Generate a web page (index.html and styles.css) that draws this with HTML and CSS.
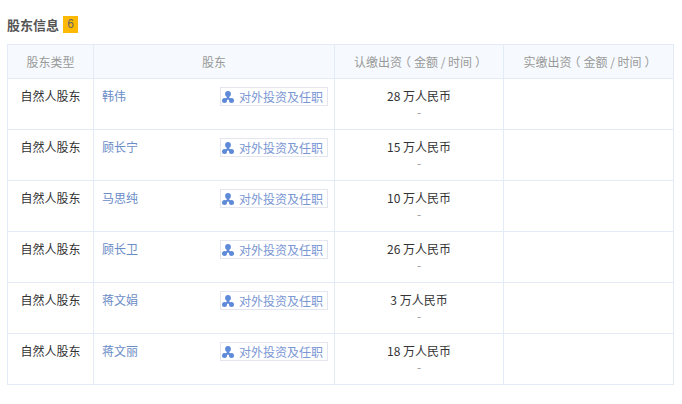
FILE: index.html
```html
<!DOCTYPE html>
<html lang="zh">
<head>
<meta charset="utf-8">
<title>股东信息</title>
<link rel="stylesheet" href="styles.css">
</head>
<body>
<svg class="defs" width="0" height="0"><symbol id="net" viewBox="0 0 12 12"><circle cx="6" cy="3" r="2.900"/><circle cx="2.500" cy="9.500" r="2.500"/><circle cx="9.500" cy="9.500" r="2.500"/><path d="M4.800 4h2.400v2.500l3 2.200-1 1.300L6 8.500 3.200 10l-1-1.300 2.600-2.200z"/></symbol></svg>
<h2 class="title">股东信息<span class="count">6</span></h2>
<table class="holders">
<colgroup><col class="c1"><col class="c2"><col class="c3"><col class="c4"></colgroup>
<thead><tr><th>股东类型</th><th>股东</th><th>认缴出资<span class="par">（</span>金额 / 时间<span class="par">）</span></th><th>实缴出资<span class="par">（</span>金额 / 时间<span class="par">）</span></th></tr></thead>
<tbody>
<tr><td class="type">自然人股东</td><td class="who"><div class="holder"><a class="name">韩伟</a><a class="btn"><svg class="ico"><use href="#net"/></svg>对外投资及任职</a></div></td><td class="money"><div>28 万人民币</div><div class="date">-</div></td><td></td></tr>
<tr><td class="type">自然人股东</td><td class="who"><div class="holder"><a class="name">顾长宁</a><a class="btn"><svg class="ico"><use href="#net"/></svg>对外投资及任职</a></div></td><td class="money"><div>15 万人民币</div><div class="date">-</div></td><td></td></tr>
<tr><td class="type">自然人股东</td><td class="who"><div class="holder"><a class="name">马思纯</a><a class="btn"><svg class="ico"><use href="#net"/></svg>对外投资及任职</a></div></td><td class="money"><div>10 万人民币</div><div class="date">-</div></td><td></td></tr>
<tr><td class="type">自然人股东</td><td class="who"><div class="holder"><a class="name">顾长卫</a><a class="btn"><svg class="ico"><use href="#net"/></svg>对外投资及任职</a></div></td><td class="money"><div>26 万人民币</div><div class="date">-</div></td><td></td></tr>
<tr><td class="type">自然人股东</td><td class="who"><div class="holder"><a class="name">蒋文娟</a><a class="btn"><svg class="ico"><use href="#net"/></svg>对外投资及任职</a></div></td><td class="money"><div>3 万人民币</div><div class="date">-</div></td><td></td></tr>
<tr><td class="type">自然人股东</td><td class="who"><div class="holder"><a class="name">蒋文丽</a><a class="btn"><svg class="ico"><use href="#net"/></svg>对外投资及任职</a></div></td><td class="money"><div>18 万人民币</div><div class="date">-</div></td><td></td></tr>
</tbody>
</table>
</body>
</html>
```
FILE: styles.css
```css
* { box-sizing: border-box; }
html, body { margin: 0; background: #fff; }
body {
  padding: 15px 8px 0 7px;
  font-family: "Noto Sans CJK SC", "Liberation Sans", sans-serif;
  font-size: 12px;
  line-height: 17px;
  color: #333;
}
.defs { position: absolute; }
.title {
  display: flex;
  align-items: center;
  gap: 4px;
  height: 18px;
  margin: 0 0 11px;
  font-size: 13px;
  font-weight: 700;
  color: #555;
}
.count {
  width: 15px;
  height: 17px;
  background: #fdb900;
  color: #666;
  font-weight: 400;
  font-family: "Liberation Sans", sans-serif;
  font-size: 12px;
  line-height: 17px;
  text-align: center;
}
.holders {
  width: 667px;
  border-collapse: collapse;
  table-layout: fixed;
}
.c1 { width: 86px; }
.c2 { width: 241px; }
.c3 { width: 169px; }
.c4 { width: 170px; }
.holders th, .holders td { border: 1px solid #e3ebf6; padding: 0; }
.holders th {
  height: 34px;
  padding-bottom: 1px;
  background: #f6fafe;
  color: #999;
  font-weight: 400;
  text-align: center;
  vertical-align: middle;
}
.par {
  display: inline-block;
  width: 12px;
  text-align: center;
  font-feature-settings: "halt";
}
.holders td { height: 51px; vertical-align: top; }
.holders .type { padding-top: 8px; text-align: center; color: #333; }
.holders .who { padding-top: 8px; }
.holder {
  display: flex;
  justify-content: space-between;
  align-items: flex-start;
  padding: 0 6px 0 8px;
}
.name { color: #6a8cc7; }
.btn {
  display: flex;
  align-items: center;
  height: 19px;
  padding: 0 4px 0 1px;
  border: 1px solid #e3e6ee;
  color: #7b97d4;
  white-space: nowrap;
}
.ico { width: 12px; height: 12px; margin-right: 5px; fill: #5f8ad8; }
.holders .money { padding-top: 8px; text-align: center; color: #333; }
.date { margin-top: -1px; color: #999; }
```
